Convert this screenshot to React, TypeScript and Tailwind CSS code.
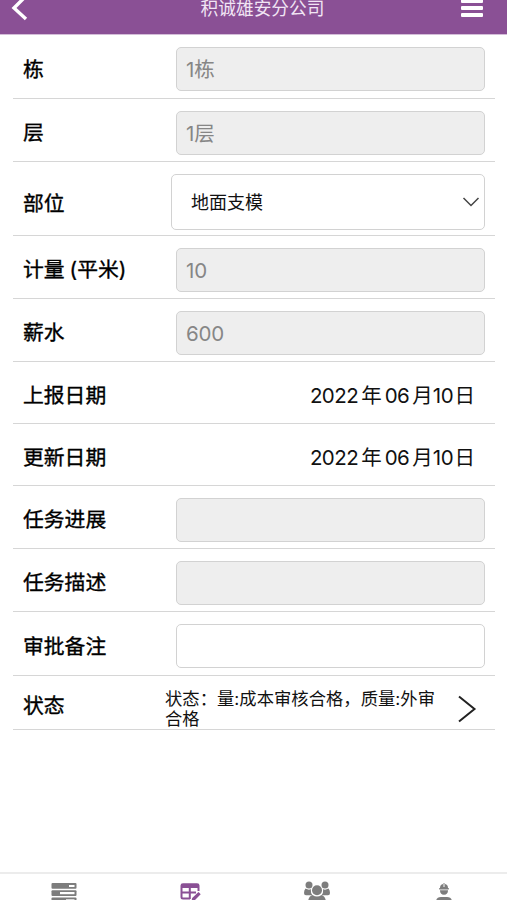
import type { ReactNode } from "react";

function Row({ label, height, shift = "", children }: { label: ReactNode; height: string; shift?: string; children: ReactNode }) {
  return (
    <div className={`flex items-center border-b border-[#d6d6d6] pl-[10px] pr-[10px] ${height}`}>
      <div
        className={`whitespace-nowrap text-[20.8px] leading-[30px] text-black [-webkit-text-stroke:0.35px_black] ${shift}`}
      >
        {label}
      </div>
      <div className="ml-auto flex items-center">{children}</div>
    </div>
  );
}

function Field({ value = "", white = false }: { value?: string; white?: boolean }) {
  return (
    <div
      className={`mt-[5px] flex h-[44px] w-[309px] items-center rounded-[5px] border border-[#d2d2d2] px-[9px] pt-[3px] text-[20.5px] tracking-[-0.2px] text-[#868686] ${
        white ? "bg-white" : "bg-[#eeeeee]"
      }`}
    >
      {value}
    </div>
  );
}

function DateText() {
  return (
    <div className="flex whitespace-nowrap pr-[10px] pt-[6px] text-[20.5px] leading-[30px] text-[#111]">
      <span className="tracking-[-0.55px]">2022</span>
      <span className="ml-[3px]">年</span>
      <span className="ml-[3px] tracking-[-0.5px]">06</span>
      <span className="ml-[3px]">月</span>
      <span className="tracking-[-0.3px]">10</span>
      <span className="ml-[1px]">日</span>
    </div>
  );
}

function Tab({ children }: { children: ReactNode }) {
  return <div className="flex flex-1 justify-center">{children}</div>;
}

export default function App() {
  return (
    <div className="flex h-[900px] w-[507px] flex-col overflow-hidden bg-white font-['Inter','Noto_Sans_CJK_SC',sans-serif]">
      <header className="flex h-[35px] shrink-0 justify-between border-b border-[#d3bdd8] bg-[#8a5095] text-white">
        <svg className="ml-[8px] h-[24px] w-[24px]" viewBox="0 0 24 24" fill="none">
          <path d="M18-4 6 8 18 19" stroke="white" strokeWidth="3.4" />
        </svg>
        <h1 className="ml-[32px] h-[18px] text-[17.7px] leading-[17px] text-[#f1e5f4]">积诚雄安分公司</h1>
        <svg className="mr-[24px] h-[20px] w-[22px]" viewBox="0 0 22 20">
          <g fill="white">
            <rect y="-1" width="22" height="4" rx="1" />
            <rect y="6" width="22" height="4" rx="1" />
            <rect y="13" width="22" height="4" rx="1" />
          </g>
        </svg>
      </header>

      <main className="flex-1 pl-[13px] pr-[12px]">
        <Row label="栋" height="h-[64px]" shift="mt-[6px]">
          <Field value="1栋" />
        </Row>
        <Row label="层" height="h-[63px]" shift="mt-[5px]">
          <Field value="1层" />
        </Row>
        <Row label="部位" height="h-[74px]" shift="mt-[10px]">
          <div className="mt-[6px] flex h-[56px] w-[314px] items-center justify-between rounded-[5px] border border-[#d2d2d2] pl-[19px] pr-[4px] pt-[1px] text-[18px] text-[#111]">
            <span>地面支模</span>
            <svg className="h-[12px] w-[18px]" viewBox="0 0 18 12" fill="none">
              <path d="m1.500 2 7.500 7.500L16.500 2" stroke="#444" strokeWidth="1.5" />
            </svg>
          </div>
        </Row>
        <Row
          label={
            <>
              计量<span className="ml-[5px]">(</span>平米)
            </>
          }
          height="h-[63px]"
          shift="mt-[6px]"
        >
          <Field value="10" />
        </Row>
        <Row label="薪水" height="h-[63px]" shift="mt-[6px]">
          <Field value="600" />
        </Row>
        <Row label="上报日期" height="h-[62px]" shift="mt-[6px]">
          <DateText />
        </Row>
        <Row label="更新日期" height="h-[62px]" shift="mt-[6px]">
          <DateText />
        </Row>
        <Row label="任务进展" height="h-[63px]" shift="mt-[6px]">
          <Field />
        </Row>
        <Row label="任务描述" height="h-[63px]" shift="mt-[6px]">
          <Field />
        </Row>
        <Row label="审批备注" height="h-[64px]" shift="mt-[6px]">
          <Field white />
        </Row>
        <Row label="状态" height="h-[54px]" shift="mt-[6px]">
          <div className="mt-[13px] w-[278px] whitespace-nowrap text-[17.3px] leading-[20px] tracking-[0.05px] text-[#111]">
            状态：量:成本审核合格，质量:外审
            <br />
            合格
          </div>
          <svg className="ml-[14px] mr-[8px] mt-[12px] h-[30px] w-[20px]" viewBox="0 0 20 30" fill="none">
            <path d="M2 2.500 17.500 15 2 27.500" stroke="#222" strokeWidth="2" />
          </svg>
        </Row>
      </main>

      <footer className="flex h-[28px] shrink-0 overflow-hidden border-t-2 border-[#ececec]">
        <Tab>
          <svg className="ml-[2px] mt-[9px] h-[24px] w-[26px]" viewBox="0 0 26 24">
            <g fill="#7d7d7d">
              <rect x=".5" y="0" width="25" height="5.800" rx="1" />
              <rect x=".5" y="7.200" width="25" height="5.800" rx="1" />
              <rect x=".5" y="14.500" width="25" height="6" rx="1" />
            </g>
            <g fill="white">
              <rect x="18" y="2" width="5.500" height="2" />
              <rect x="9" y="9" width="14.500" height="2.200" />
              <rect x="15" y="16.300" width="8.500" height="2" />
            </g>
          </svg>
        </Tab>
        <Tab>
          <svg className="ml-[2px] mt-[9px] h-[24px] w-[22px]" viewBox="0 0 22 24" fill="none">
            <path d="M10 15.500H3q-1.500 0-1.500-1.500V2.500Q1.500 1.300 3 1.300h14q1.500 0 1.500 1.200V8M1.500 9.500H16M9.800 3v13" stroke="#8a5095" strokeWidth="2" />
            <path d="M1.500 1h17v4h-17z" fill="#8a5095" />
            <path d="m11.500 18 .7-3L18.500 9l2.200 2.300-6.200 6.200z" fill="#8a5095" />
          </svg>
        </Tab>
        <Tab>
          <svg className="mt-[7px] h-[24px] w-[28px]" viewBox="0 0 28 24" fill="#7d7d7d">
            <circle cx="6" cy="4" r="3.500" />
            <circle cx="22" cy="4" r="3.500" />
            <path d="M2.500 7.500Q6 9.500 7.800 8 7.500 12 9.500 14.200H3Q1 14.200 1 12 1 9 2.500 7.500M25.500 7.500Q22 9.500 20.200 8q.3 4-1.700 6.200H25q2 0 2-2.200 0-3-1.500-4.500" />
            <circle cx="14" cy="9.300" r="5" />
            <path d="M9.500 14q4.500 3 9 0Q23 15.500 23 22H5q0-6.500 4.500-8" />
          </svg>
        </Tab>
        <Tab>
          <svg className="mt-[9px] h-[24px] w-[20px]" viewBox="0 0 20 24" fill="#7d7d7d">
            <path d="M6 5q0-3.500 3-4v3h.5V0h1v4h.5V1q3 .5 3 4h.8v1.500H5.200V5zM6 7.300h8Q14 11.700 10 11.700T6 7.300M2 19q0-5 5-5h6q5 0 5 5z" />
          </svg>
        </Tab>
      </footer>
    </div>
  );
}
